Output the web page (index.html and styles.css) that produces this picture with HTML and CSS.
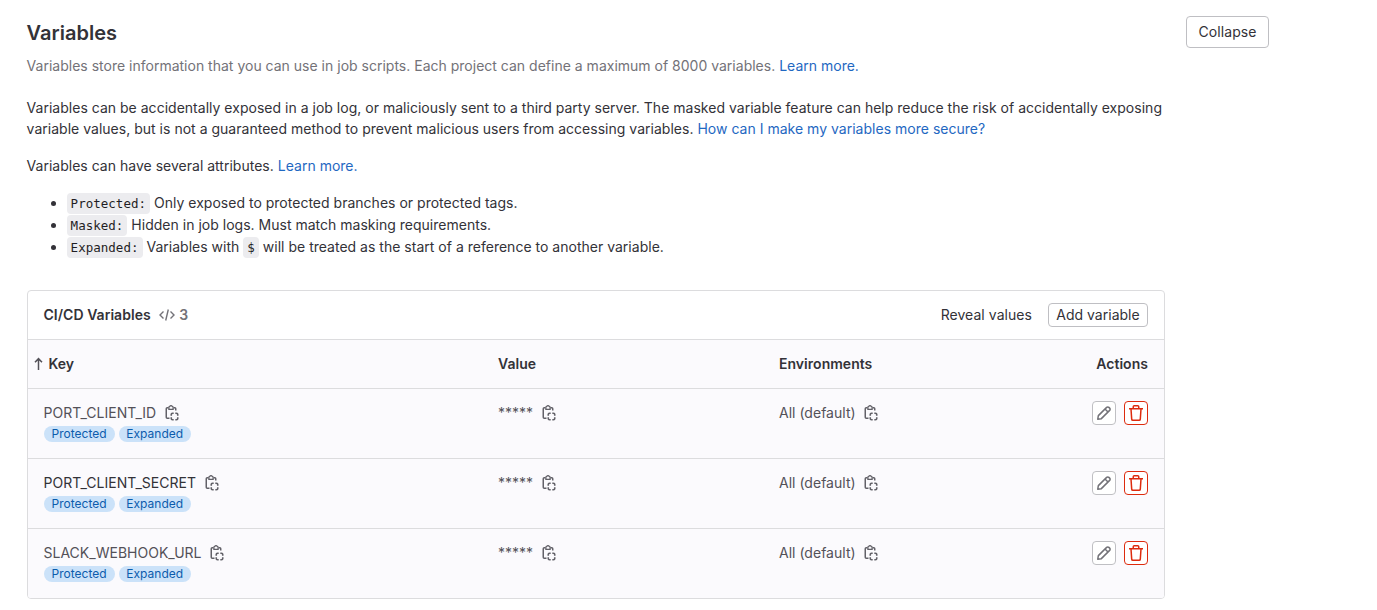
FILE: index.html
```html
<!DOCTYPE html>
<html lang="en">
<head>
<meta charset="utf-8">
<title>CI/CD Variables</title>
<link rel="stylesheet" href="styles.css">
</head>
<body>
<svg class="sprite" width="0" height="0">
  <symbol id="copy" viewBox="0 0 16 16">
    <path d="M4.500 2.750H3.250a1 1 0 0 0-1 1v8.500a1 1 0 0 0 1 1H5.500M9.500 2.750h1.250a1 1 0 0 1 1 1V5.500" fill="none" stroke="currentColor" stroke-width="1.500"/>
    <path d="M4.900 4.300V2.400a1.200 1.200 0 0 1 1.200-1.200 1 1 0 0 1 1.800 0A1.200 1.200 0 0 1 9.100 2.400v1.900z" fill="none" stroke="currentColor" stroke-width="1.300"/>
    <path d="M7.250 10.700V9.500a1.250 1.250 0 0 1 1.250-1.250H9.700M11.300 8.250h1.200a1.250 1.250 0 0 1 1.250 1.250v1.200M13.750 12.300v1.200a1.250 1.250 0 0 1-1.250 1.250H11.300M9.700 14.750H8.500a1.250 1.250 0 0 1-1.250-1.250V12.300" fill="none" stroke="currentColor" stroke-width="1.600"/>
  </symbol>
  <symbol id="pencil" viewBox="0 0 16 16">
    <path d="M1.750 14.250l.6-3.600 8.300-8.300a1.550 1.550 0 0 1 2.200 0l.8.8a1.550 1.550 0 0 1 0 2.200l-8.300 8.300zM9 4l3 3" fill="none" stroke="currentColor" stroke-width="1.500" stroke-linejoin="round"/>
  </symbol>
  <symbol id="trash" viewBox="0 0 16 16">
    <path d="M1 3.750h14M5.250 3.500V1.750a1 1 0 0 1 1-1h3.500a1 1 0 0 1 1 1V3.500M3 4l.7 10.100a1.200 1.200 0 0 0 1.200 1.150h6.200a1.200 1.200 0 0 0 1.200-1.150L13 4" fill="none" stroke="currentColor" stroke-width="1.500"/>
  </symbol>
</svg>
<main class="settings">
  <header class="settings-header">
    <div>
      <h4 class="title">Variables</h4>
      <p class="description">Variables store information that you can use in job scripts. Each project can define a maximum of 8000 variables. <a href="#">Learn more.</a></p>
    </div>
    <button class="btn btn-collapse">Collapse</button>
  </header>
  <section class="content">
    <p class="warning">Variables can be accidentally exposed in a job log, or maliciously sent to a third party server. The masked variable feature can help reduce the risk of accidentally exposing<br>variable values, but is not a guaranteed method to prevent malicious users from accessing variables. <a href="#">How can I make my variables more secure?</a></p>
    <p class="intro">Variables can have several attributes. <a href="#">Learn more.</a></p>
    <ul class="attributes">
      <li><code>Protected:</code> Only exposed to protected branches or protected tags.</li>
      <li><code>Masked:</code> Hidden in job logs. Must match masking requirements.</li>
      <li><code>Expanded:</code> Variables with <code>$</code> will be treated as the start of a reference to another variable.</li>
    </ul>
    <div class="card">
      <div class="card-header">
        <h5 class="card-title">CI/CD Variables</h5>
        <span class="count"><svg class="icon" viewBox="0 0 16 16"><path d="M4.500 4.500L1 8l3.500 3.500M11.500 4.500L15 8l-3.500 3.500M9.300 2.500L6.700 13.500" fill="none" stroke="currentColor" stroke-width="1.400"/></svg><span>3</span></span>
        <div class="card-actions">
          <button class="btn btn-plain">Reveal values</button>
          <button class="btn btn-small">Add variable</button>
        </div>
      </div>
      <table class="variables">
        <colgroup><col class="col-key"><col class="col-value"><col class="col-env"><col></colgroup>
        <thead>
          <tr><th class="sorted"><svg class="arrow" viewBox="0 0 9 14"><path d="M4.500 13V2M1 5.300L4.500 1.700 8 5.300" fill="none" stroke="currentColor" stroke-width="1.500"/></svg>Key</th><th>Value</th><th>Environments</th><th class="end">Actions</th></tr>
        </thead>
        <tbody>
          <tr>
            <td><div class="cell"><span>PORT_CLIENT_ID</span><svg class="icon copy"><use href="#copy"/></svg></div><div class="badges"><span class="badge">Protected</span><span class="badge">Expanded</span></div></td>
            <td><div class="cell"><span>*****</span><svg class="icon copy"><use href="#copy"/></svg></div></td>
            <td><div class="cell"><span>All (default)</span><svg class="icon copy"><use href="#copy"/></svg></div></td>
            <td><div class="actions"><button class="icon-btn"><svg class="icon"><use href="#pencil"/></svg></button><button class="icon-btn danger"><svg class="icon"><use href="#trash"/></svg></button></div></td>
          </tr>
          <tr>
            <td><div class="cell strong"><span>PORT_CLIENT_SECRET</span><svg class="icon copy"><use href="#copy"/></svg></div><div class="badges"><span class="badge">Protected</span><span class="badge">Expanded</span></div></td>
            <td><div class="cell"><span>*****</span><svg class="icon copy"><use href="#copy"/></svg></div></td>
            <td><div class="cell"><span>All (default)</span><svg class="icon copy"><use href="#copy"/></svg></div></td>
            <td><div class="actions"><button class="icon-btn"><svg class="icon"><use href="#pencil"/></svg></button><button class="icon-btn danger"><svg class="icon"><use href="#trash"/></svg></button></div></td>
          </tr>
          <tr>
            <td><div class="cell"><span>SLACK_WEBHOOK_URL</span><svg class="icon copy"><use href="#copy"/></svg></div><div class="badges"><span class="badge">Protected</span><span class="badge">Expanded</span></div></td>
            <td><div class="cell"><span>*****</span><svg class="icon copy"><use href="#copy"/></svg></div></td>
            <td><div class="cell"><span>All (default)</span><svg class="icon copy"><use href="#copy"/></svg></div></td>
            <td><div class="actions"><button class="icon-btn"><svg class="icon"><use href="#pencil"/></svg></button><button class="icon-btn danger"><svg class="icon"><use href="#trash"/></svg></button></div></td>
          </tr>
        </tbody>
      </table>
    </div>
  </section>
</main>
</body>
</html>
```

FILE: styles.css
```css
* { box-sizing: border-box; }
body {
  margin: 0;
  background: #fff;
  color: #333238;
  font: 14px/21px Inter, "Liberation Sans", sans-serif;
  letter-spacing: 0.012px;
  white-space: nowrap;
  overflow: hidden;
}
h4, h5, p, ul { margin: 0; }
a { color: #1f68c2; text-decoration: none; }
button { font: inherit; color: inherit; letter-spacing: 0.012px; }
.sprite { display: block; }
.settings { width: 1269px; padding: 16px 0 0 26.6px; }
.settings-header { display: flex; justify-content: space-between; align-items: flex-start; }
.title { padding-top: 1px; font-size: 20px; line-height: 32px; font-weight: 600; letter-spacing: 0.02px; }
.description { margin-top: 6px; color: #737278; letter-spacing: 0.005px; }
.btn {
  height: 32px;
  padding: 0 11px;
  border: 1px solid #bfbfc3;
  border-radius: 4px;
  background: #fff;
}
.btn-collapse { width: 83px; padding-bottom: 2px; letter-spacing: 0.1px; }
.content { width: 1138.4px; }
.warning { margin-top: 21px; letter-spacing: 0.016px; }
.intro { margin-top: 16px; }
.attributes { margin-top: 16px; padding-left: 40px; }
.attributes li { line-height: 22px; }
code {
  padding: 3px 4px;
  border-radius: 4px;
  background: #ececef;
  color: #1f1e24;
  font: 12.5px "DejaVu Sans Mono", monospace;
  letter-spacing: 0.02px;
}
.card { margin: 32px 0 0 0.4px; border: 1px solid #dcdcde; border-radius: 4px; overflow: hidden; }
.card-header { display: flex; align-items: center; height: 48px; padding: 0 16px 0 15.5px; }
.card-title { padding-bottom: 2px; font-size: 14px; font-weight: 600; letter-spacing: 0.04px; }
.count { display: flex; align-items: center; gap: 4px; margin-left: 8.4px; color: #737278; font-weight: 600; }
.count span { padding-bottom: 2px; }
.card-actions { display: flex; align-items: center; gap: 8px; margin-left: auto; }
.btn-plain { height: 24px; padding: 0 8px 2px; border: 0; letter-spacing: 0.05px; }
.btn-small { width: 100px; height: 24px; padding: 0 7px; line-height: 16px; }
.variables { width: 100%; table-layout: fixed; border-collapse: separate; border-spacing: 0; background: #fbfafd; }
.col-key { width: 454px; }
.col-value { width: 281px; }
.col-env { width: 280px; }
th { height: 49px; padding: 0 16px 2px; border-top: 1px solid #dcdcde; text-align: left; font-weight: 600; letter-spacing: 0.03px; }
td { height: 70px; padding: 12px 16px 0; border-top: 1px solid #dcdcde; vertical-align: top; }
td:first-child { padding-left: 15.5px; }
.sorted { padding-left: 6px; }
.arrow { width: 9px; height: 14px; margin-right: 5.5px; vertical-align: -2px; color: #535158; }
.end { text-align: right; }
.icon { display: block; width: 16px; height: 16px; }
.cell { display: flex; align-items: center; height: 24px; color: #535158; }
.cell span { padding-bottom: 2px; }
.strong { color: #333238; }
.copy { margin-left: 7.6px; color: #626168; }
.badges { display: flex; gap: 4px; margin-top: 1px; padding-left: 0.5px; }
.badge { height: 16px; padding: 0 8px 0 7.6px; border-radius: 8px; background: #cbe2f9; color: #0b5cad; font-size: 12px; line-height: 16px; }
.actions { display: flex; justify-content: flex-end; gap: 8px; }
.icon-btn {
  display: flex;
  align-items: center;
  justify-content: center;
  width: 24px;
  height: 24px;
  padding: 0;
  border: 1px solid #bfbfc3;
  border-radius: 4px;
  background: #fff;
  color: #737278;
}
.danger { border-color: #dd2b0e; color: #dd2b0e; }
```
